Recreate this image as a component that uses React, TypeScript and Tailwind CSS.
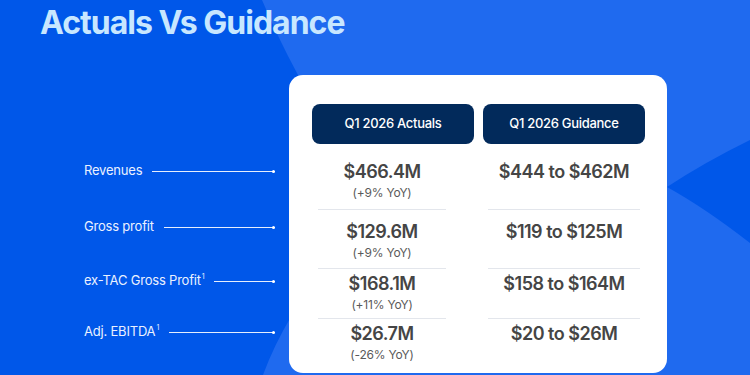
import React from "react";

type Row = {
    actual: string;
    yoy: string;
    guidance: string;
    cell: string;
    pad: string;
};

const rows: Row[] = [
    { actual: "$466.4M", yoy: "(+9% YoY)", guidance: "$444 to $462M", cell: "h-[66px] border-b-[1.5px]", pad: "pt-[16px]" },
    { actual: "$129.6M", yoy: "(+9% YoY)", guidance: "$119 to $125M", cell: "h-[59px] border-b-[1.5px]", pad: "pt-[10px]" },
    { actual: "$168.1M", yoy: "(+11% YoY)", guidance: "$158 to $164M", cell: "h-[50px] border-b-[1.5px]", pad: "pt-[3px]" },
    { actual: "$26.7M", yoy: "(-26% YoY)", guidance: "$20 to $26M", cell: "h-[54px]", pad: "pt-[3px]" },
];

const labels = [
    { text: "Revenues", sup: false, gap: "mt-0" },
    { text: "Gross profit", sup: false, gap: "mt-[36px]" },
    { text: "ex-TAC Gross Profit", sup: true, gap: "mt-[34px]" },
    { text: "Adj. EBITDA", sup: true, gap: "mt-[31px]" },
];

// Decorative background shapes
const Backdrop: React.FC = () => (
    <svg className="absolute inset-0" width="750" height="375" viewBox="0 0 750 375">
        <path
            d="M262 0 L750 0 L750 140 Q705 162 667 187 Q705 208 750 243 L750 375 L263 375 Q274 345 292 315 L310 200 L298 75 Q278 38 262 0 Z"
            fill="#1f6aef"
        />
    </svg>
);

export default function App() {
    return (
        <div className="relative w-[750px] h-[375px] overflow-hidden bg-[#0057e9] font-['Inter',sans-serif]">
            <Backdrop />

            <div className="relative flex flex-col">
                {/* Title */}
                <div className="-mt-[32px] pl-[40px] font-bold text-[32px] tracking-[-1px] text-[#c8e7ff]">
                    <div className="leading-[38px]">Q1 2026 Results</div>
                    <div className="leading-[34px]">Actuals Vs Guidance</div>
                </div>

                <div className="mt-[35px] flex">
                    {/* Row labels */}
                    <div className="w-[289px] shrink-0 pl-[84px] pr-[14px] pt-[86px] flex flex-col">
                        {labels.map((l) => (
                            <div key={l.text} className={`${l.gap} h-[20px] flex items-center`}>
                                <span className="whitespace-nowrap text-[13px] tracking-[-0.2px] text-[#eaf1ff]">
                                    {l.text}
                                    {l.sup && <sup className="text-[7px] ml-[1px] -top-[6px]">1</sup>}
                                </span>
                                <div className="relative ml-[10px] flex-1 h-px bg-white/90">
                                    <span className="absolute right-0 -top-[1px] w-[3px] h-[3px] rounded-full bg-white" />
                                </div>
                            </div>
                        ))}
                    </div>

                    {/* Table card */}
                    <div className="w-[378px] h-[298px] shrink-0 rounded-[14px] bg-white pt-[29px] pl-[23px] pr-[22px]">
                        <div className="grid grid-cols-2 gap-x-[9px]">
                            <div className="h-[40px] rounded-lg bg-[#022a5b] flex items-center justify-center text-white text-[13px] tracking-[-0.3px] font-medium">
                                Q1 2026 Actuals
                            </div>
                            <div className="h-[40px] rounded-lg bg-[#022a5b] flex items-center justify-center text-white text-[13px] tracking-[-0.3px] font-medium">
                                Q1 2026 Guidance
                            </div>
                        </div>

                        {rows.map((r) => (
                            <div key={r.actual} className="grid grid-cols-2 gap-x-[9px]">
                                <div className="pl-[6px] pr-[28px]">
                                    <div className={`${r.cell} ${r.pad} border-[#e3e6ec] flex flex-col items-center`}>
                                        <div className="leading-[24px] text-[18px] tracking-[-0.5px] font-semibold text-[#454545] whitespace-nowrap">{r.actual}</div>
                                        <div className="leading-[18px] text-[12px] tracking-[-0.2px] text-[#5a5a5a] whitespace-nowrap">{r.yoy}</div>
                                    </div>
                                </div>
                                <div className="px-[5px]">
                                    <div className={`${r.cell} ${r.pad} border-[#e3e6ec] flex flex-col items-center`}>
                                        <div className="leading-[24px] text-[18px] tracking-[-0.5px] font-semibold text-[#454545] whitespace-nowrap">{r.guidance}</div>
                                    </div>
                                </div>
                            </div>
                        ))}
                    </div>
                </div>
            </div>
        </div>
    );
}
